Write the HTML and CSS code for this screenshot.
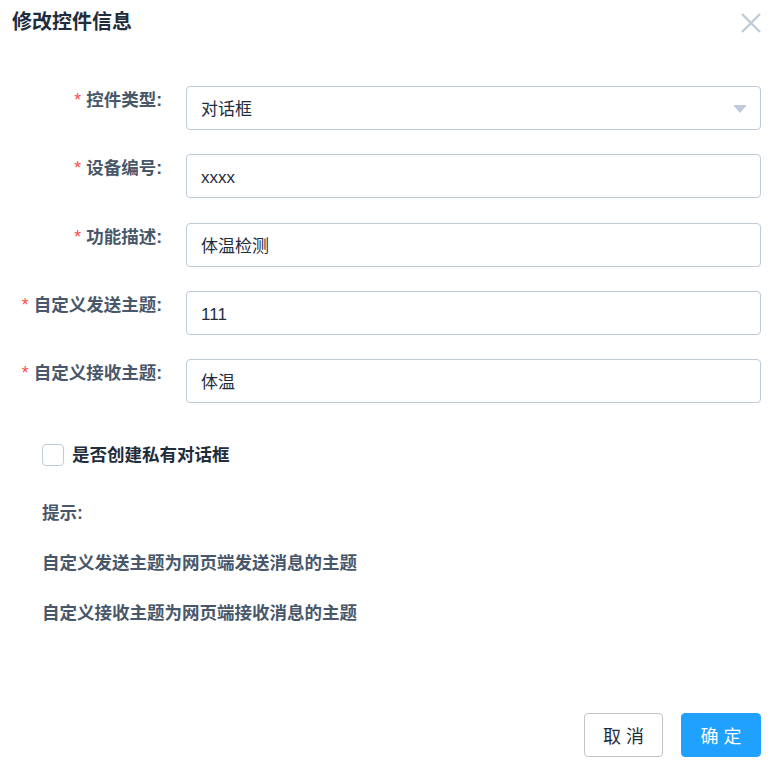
FILE: index.html
```html
<!DOCTYPE html>
<html lang="zh">
<head>
<meta charset="utf-8">
<title>修改控件信息</title>
<link rel="stylesheet" href="styles.css">
</head>
<body>
<div class="dialog">
  <div class="header">
    <span class="title">修改控件信息</span>
    <svg class="close" width="20" height="20" viewBox="0 0 20 20"><path d="M1 1 L19 19 M19 1 L1 19" stroke="#bfcbd9" stroke-width="2.4" fill="none"/></svg>
  </div>
  <div class="form">
    <div class="row">
      <label class="label"><span class="star">*</span>控件类型:</label>
      <div class="input select">对话框<span class="caret"></span></div>
    </div>
    <div class="row">
      <label class="label"><span class="star">*</span>设备编号:</label>
      <div class="input">xxxx</div>
    </div>
    <div class="row">
      <label class="label"><span class="star">*</span>功能描述:</label>
      <div class="input">体温检测</div>
    </div>
    <div class="row">
      <label class="label"><span class="star">*</span>自定义发送主题:</label>
      <div class="input">111</div>
    </div>
    <div class="row">
      <label class="label"><span class="star">*</span>自定义接收主题:</label>
      <div class="input">体温</div>
    </div>
  </div>
  <div class="check">
    <span class="box"></span>
    <span class="check-label">是否创建私有对话框</span>
  </div>
  <div class="hint hint-title">提示:</div>
  <div class="hint">自定义发送主题为网页端发送消息的主题</div>
  <div class="hint">自定义接收主题为网页端接收消息的主题</div>
  <div class="footer">
    <button class="btn btn-cancel">取 消</button>
    <button class="btn btn-primary">确 定</button>
  </div>
</div>
</body>
</html>
```
FILE: styles.css
```css
html, body {
  margin: 0;
  padding: 0;
  background: #fff;
}
body {
  font-family: "Liberation Sans", "Noto Sans CJK SC", sans-serif;
  color: #1f2d3d;
}
.dialog {
  width: 775px;
  height: 765px;
  box-sizing: border-box;
  padding: 0 14px 0 0;
  display: flex;
  flex-direction: column;
}
.header {
  height: 44px;
  display: flex;
  align-items: center;
  justify-content: space-between;
  padding-left: 12px;
}
.title {
  font-size: 20px;
  font-weight: bold;
  color: #1f2d3d;
  line-height: 46px;
}
.close {
  display: block;
  margin-top: 2px;
}
.form {
  margin-top: 42px;
}
.row {
  display: flex;
  gap: 24px;
  margin-bottom: 24.3px;
}
.row:last-child {
  margin-bottom: 0;
}
.label {
  width: 162px;
  flex: none;
  text-align: right;
  font-size: 17.5px;
  font-weight: bold;
  line-height: 29px;
  color: #48576a;
}
.star {
  color: #ff4949;
  margin-right: 5px;
  font-weight: normal;
}
.input {
  flex: 1;
  height: 44px;
  box-sizing: border-box;
  border: 1px solid #bfcbd9;
  border-radius: 4px;
  padding: 3px 14px 0;
  font-size: 17px;
  line-height: 40px;
  color: #1f2d3d;
  position: relative;
}
.caret {
  position: absolute;
  right: 13px;
  top: 18px;
  width: 0;
  height: 0;
  border-left: 7px solid transparent;
  border-right: 7px solid transparent;
  border-top: 8px solid #bfcbd9;
}
.check {
  margin-top: 41px;
  margin-left: 42px;
  display: flex;
  align-items: center;
  gap: 8px;
  height: 22px;
}
.box {
  width: 22px;
  height: 22px;
  box-sizing: border-box;
  border: 1px solid #bfcbd9;
  border-radius: 4px;
}
.check-label {
  font-size: 17.5px;
  font-weight: bold;
  color: #1f2d3d;
  line-height: 22px;
}
.hint {
  margin-left: 42px;
  margin-top: 26px;
  font-size: 17.5px;
  font-weight: bold;
  color: #48576a;
  line-height: 24px;
}
.hint-title {
  margin-top: 35px;
}
.footer {
  margin-top: auto;
  margin-bottom: 8px;
  display: flex;
  justify-content: flex-end;
  gap: 18px;
}
.btn {
  height: 44px;
  border-radius: 4px;
  font-family: "Liberation Sans", "Noto Sans CJK SC", sans-serif;
  font-size: 18px;
  padding: 0;
  cursor: pointer;
}
.btn-cancel {
  width: 79px;
  background: #fff;
  border: 1px solid #c4c4c4;
  color: #1f2d3d;
}
.btn-primary {
  width: 80px;
  background: #20a0ff;
  border: 1px solid #20a0ff;
  color: #fff;
}
```
